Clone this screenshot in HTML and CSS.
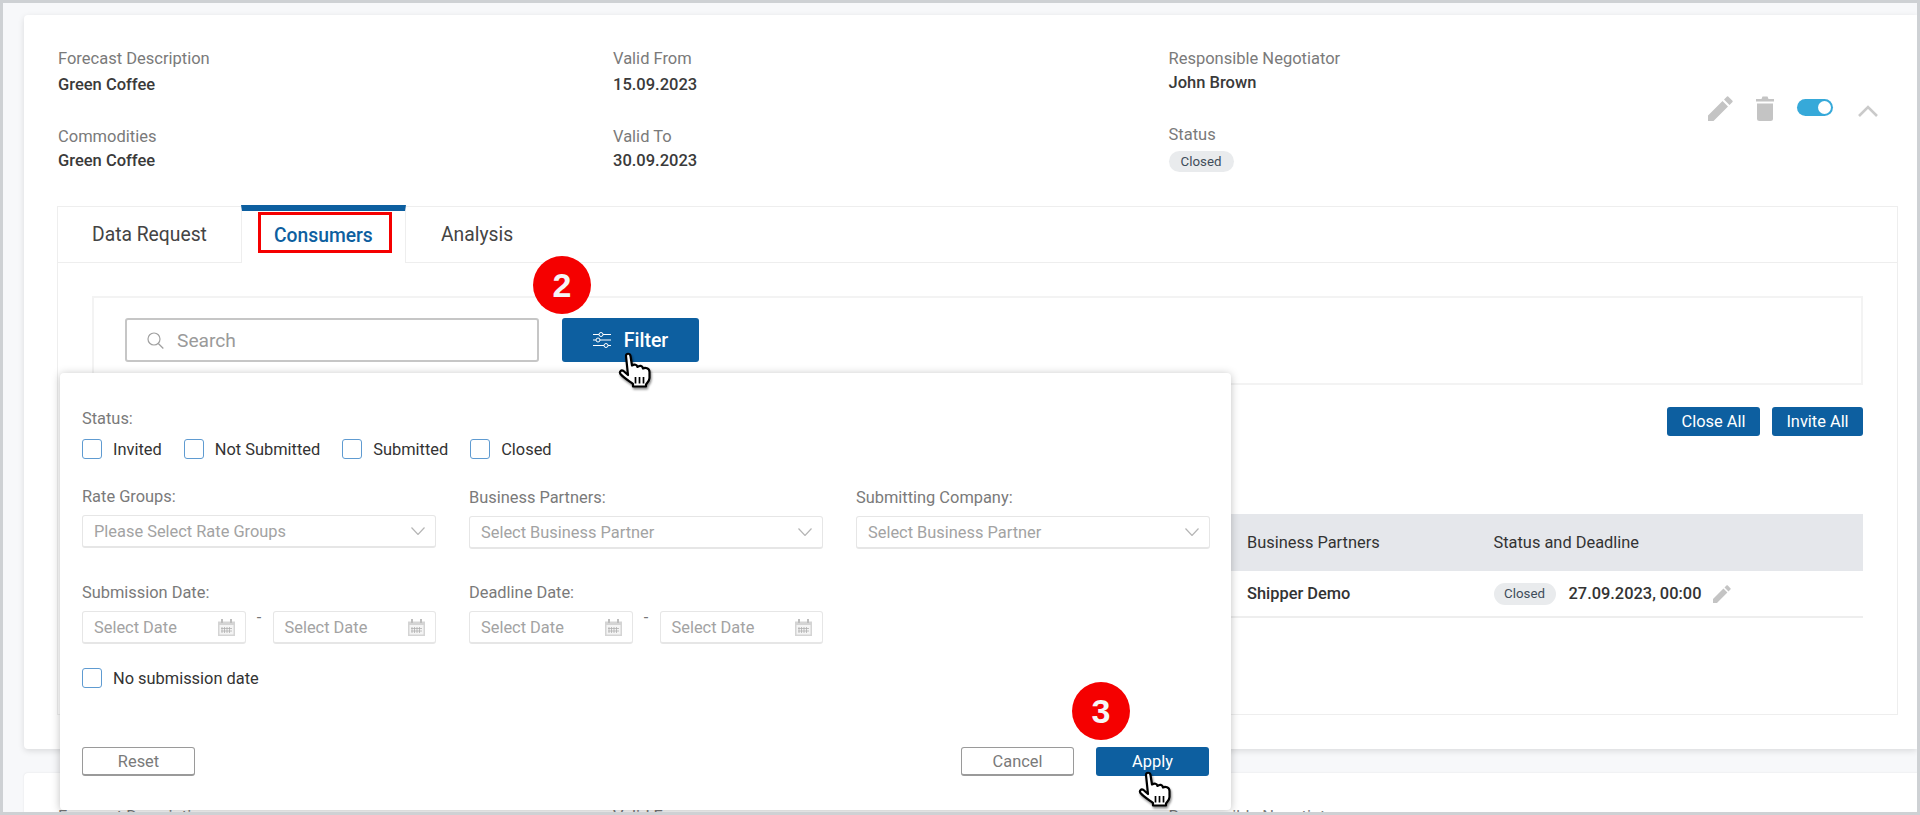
FILE: index.html
```html
<!DOCTYPE html>
<html lang="en">
<head>
    <meta charset="UTF-8">
    <title>Forecast Consumers</title>
    <link rel="stylesheet" href="styles.css">
</head>
<body>
    <svg class="defs" width="0" height="0">
        <symbol id="hand" viewBox="0 0 34 36">
            <path d="M8 4 C8 1 12 1 12.5 4 L14 13.5 C16.5 12 19 12.5 19.5 15 C21.5 13 24.5 13.5 25 16.5 C27 15 31.5 16 31.5 20 L31.5 26 C31.5 29 29 31 28 32.5 L28 34.5 L15 34.5 L15 32 C11 29 6 26 2.5 22 C1 20 3 17.5 5.5 19 L10 23 Z" fill="#fff" stroke="#000" stroke-width="2.2" stroke-linejoin="round"/>
            <path d="M17.5 25 V31.5 M21.5 25 V31.5 M25.5 25 V31.5" stroke="#000" stroke-width="1.7"/>
        </symbol>
        <symbol id="pencil" viewBox="0 0 25 25">
            <path d="M0 19.5 L14.5 5 L20 10.5 L5.5 25 H0 Z M16 3.5 L19 0.5 Q19.6 0 20.2 0.5 L24.5 4.8 Q25 5.4 24.5 6 L21.5 9 Z" fill="currentColor"/>
        </symbol>
        <symbol id="chevron-down" viewBox="0 0 14 8">
            <path d="M0.5 0.5 L7 7.5 L13.5 0.5" fill="none" stroke="#b5b5b5" stroke-width="1.2"/>
        </symbol>
        <symbol id="calendar" viewBox="0 0 17 17">
            <path d="M0 2.5 H17 V17 H0 Z" fill="#d4d4d4"/>
            <path d="M3 0 H5 V4 H3 Z M12 0 H14 V4 H12 Z" fill="#bdbdbd"/>
            <path d="M1.5 6 H15.5 V15.5 H1.5 Z" fill="#f4f4f4"/>
            <path d="M4 8 V14 M6.5 8 V14 M9 8 V14 M11.5 8 V14 M3 9.5 H14 M3 12 H14" stroke="#b0b0b0" stroke-width="0.8"/>
        </symbol>
    </svg>

    <div class="page">
        <div class="card">
            <div class="summary">
                <div class="summary-col">
                    <div class="field">
                        <div class="label">Forecast Description</div>
                        <div class="value value-low">Green Coffee</div>
                    </div>
                    <div class="field">
                        <div class="label">Commodities</div>
                        <div class="value">Green Coffee</div>
                    </div>
                </div>
                <div class="summary-col">
                    <div class="field">
                        <div class="label">Valid From</div>
                        <div class="value value-low">15.09.2023</div>
                    </div>
                    <div class="field">
                        <div class="label">Valid To</div>
                        <div class="value">30.09.2023</div>
                    </div>
                </div>
                <div class="summary-col">
                    <div class="field">
                        <div class="label">Responsible Negotiator</div>
                        <div class="value">John Brown</div>
                    </div>
                    <div class="field field-status">
                        <div class="label">Status</div>
                        <span class="pill pill-status">Closed</span>
                    </div>
                </div>
                <div class="actions">
                    <svg class="icon-pencil" width="25" height="25"><use href="#pencil"/></svg>
                    <svg class="icon-trash" width="18" height="25" viewBox="0 0 18 25">
                        <path d="M0 3 H5.5 L6.5 0.5 H11.5 L12.5 3 H18 V5.5 H0 Z" fill="#c4c4c4"/>
                        <path d="M1 7.5 H17 V22.5 Q17 25 14.5 25 H3.5 Q1 25 1 22.5 Z" fill="#c4c4c4"/>
                    </svg>
                    <span class="toggle"><span class="toggle-knob"></span></span>
                    <svg class="icon-chevron" width="20" height="12" viewBox="0 0 20 12">
                        <path d="M1 11 L10 2 L19 11" fill="none" stroke="#cacaca" stroke-width="2.6"/>
                    </svg>
                </div>
            </div>

            <div class="tabs-panel">
                <div class="tabs">
                    <div class="tab tab-first">Data Request</div>
                    <div class="tab tab-active">Consumers<span class="tab-mark"></span></div>
                    <div class="tab">Analysis</div>
                </div>
                <div class="tab-body">
                    <div class="toolbar">
                        <div class="search">
                            <svg width="17" height="17" viewBox="0 0 17 17">
                                <circle cx="7" cy="7" r="6" fill="none" stroke="#a0a0a0" stroke-width="1.2"/>
                                <path d="M11.3 11.5 L16.3 16.5" stroke="#a0a0a0" stroke-width="1.2"/>
                            </svg>
                            <span>Search</span>
                        </div>
                        <div class="btn btn-primary btn-filter">
                            <svg width="18" height="16" viewBox="0 0 18 16">
                                <path d="M0 2.5 H18 M0 8 H18 M0 13.5 H18" stroke="#fff" stroke-width="1"/>
                                <circle cx="8" cy="2.5" r="2" fill="#0d5fa0" stroke="#fff"/>
                                <circle cx="5" cy="8" r="2" fill="#0d5fa0" stroke="#fff"/>
                                <circle cx="13" cy="13.5" r="2" fill="#0d5fa0" stroke="#fff"/>
                            </svg>
                            Filter
                        </div>
                    </div>
                    <div class="bulk-actions">
                        <div class="btn btn-primary btn-close-all">Close All</div>
                        <div class="btn btn-primary btn-invite-all">Invite All</div>
                    </div>
                    <div class="table">
                        <div class="table-row table-head">
                            <div></div>
                            <div>Business Partners</div>
                            <div>Status and Deadline</div>
                        </div>
                        <div class="table-row table-line">
                            <div></div>
                            <div class="partner">Shipper Demo</div>
                            <div class="deadline">
                                <span class="pill">Closed</span>
                                <span class="deadline-date">27.09.2023, 00:00</span>
                                <svg class="icon-pencil" width="18" height="18"><use href="#pencil"/></svg>
                            </div>
                        </div>
                    </div>
                </div>
            </div>
        </div>

        <div class="card">
            <div class="summary">
                <div class="summary-col"><div class="label">Forecast Description</div></div>
                <div class="summary-col"><div class="label">Valid From</div></div>
                <div class="summary-col"><div class="label">Responsible Negotiator</div></div>
            </div>
        </div>

        <!-- filter popup -->
        <div class="popover">
            <div class="form-label">Status:</div>
            <div class="check-row">
                <label class="check"><span class="box"></span>Invited</label>
                <label class="check"><span class="box"></span>Not Submitted</label>
                <label class="check"><span class="box"></span>Submitted</label>
                <label class="check"><span class="box"></span>Closed</label>
            </div>
            <div class="form-grid">
                <div class="form-group form-group-up">
                    <div class="form-label">Rate Groups:</div>
                    <div class="select">Please Select Rate Groups<svg width="14" height="8"><use href="#chevron-down"/></svg></div>
                </div>
                <div class="form-group">
                    <div class="form-label">Business Partners:</div>
                    <div class="select">Select Business Partner<svg width="14" height="8"><use href="#chevron-down"/></svg></div>
                </div>
                <div class="form-group">
                    <div class="form-label">Submitting Company:</div>
                    <div class="select">Select Business Partner<svg width="14" height="8"><use href="#chevron-down"/></svg></div>
                </div>
            </div>
            <div class="form-grid form-grid-dates">
                <div class="form-group">
                    <div class="form-label">Submission Date:</div>
                    <div class="date-range">
                        <div class="date">Select Date<svg width="17" height="17"><use href="#calendar"/></svg></div>
                        <span class="dash">-</span>
                        <div class="date">Select Date<svg width="17" height="17"><use href="#calendar"/></svg></div>
                    </div>
                </div>
                <div class="form-group">
                    <div class="form-label">Deadline Date:</div>
                    <div class="date-range">
                        <div class="date">Select Date<svg width="17" height="17"><use href="#calendar"/></svg></div>
                        <span class="dash">-</span>
                        <div class="date">Select Date<svg width="17" height="17"><use href="#calendar"/></svg></div>
                    </div>
                </div>
            </div>
            <label class="check check-single"><span class="box"></span>No submission date</label>
            <div class="popover-footer">
                <div class="btn btn-outline">Reset</div>
                <div class="footer-right">
                    <div class="btn btn-outline">Cancel</div>
                    <div class="btn btn-primary btn-apply">Apply</div>
                </div>
            </div>
        </div>

        <!-- tutorial markers -->
        <div class="step step-filter">2</div>
        <div class="step step-apply">3</div>
        <svg class="cursor cursor-filter" width="34" height="36"><use href="#hand"/></svg>
        <svg class="cursor cursor-apply" width="34" height="36"><use href="#hand"/></svg>
    </div>
</body>
</html>
```
FILE: styles.css
```css
* {
    box-sizing: border-box;
}
html, body {
    margin: 0;
    height: 815px;
    overflow: hidden;
}
body {
    font-family: Roboto, Arial, sans-serif;
    font-size: 16.4px;
    color: #333;
}
.defs {
    position: absolute;
}
.page {
    position: relative;
    height: 815px;
    border: 3px solid #ced1d4;
    background-color: #f7f8fa;
    padding: 12px 0 0 21px;
    overflow: hidden;
    display: flex;
    flex-direction: column;
    gap: 24px;
}
.card {
    flex-shrink: 0;
    background: white;
    border-radius: 4px 0 0 4px;
    padding-bottom: 34px;
    box-shadow: 0 2px 6px rgba(0,0,0,0.12);
}
.card:nth-child(2) {
    padding-bottom: 0;
    box-shadow: 0 0 2px rgba(0,0,0,0.1);
}

/* summary */
.summary {
    display: flex;
    height: 191px;
    padding: 32px 0 0 34px;
    position: relative;
}
.card:nth-child(2) .summary {
    height: 60px;
}
.summary-col {
    width: 555px;
    flex-shrink: 0;
}
.summary-col:nth-child(2) {
    width: 555.5px;
}
.field {
    margin-bottom: 28px;
}
.label {
    color: #7a7a7a;
    font-size: 16.5px;
    line-height: 24px;
}
.value {
    font-size: 16.5px;
    font-weight: 500;
    line-height: 24px;
    color: #3a3a3a;
}
.value-low {
    margin-top: 2px;
}
.field-status .label {
    margin-bottom: 4px;
}
.pill {
    display: inline-block;
    width: 62px;
    text-align: center;
    background-color: #e9ebed;
    color: #3f4d5a;
    font-size: 13.3px;
    line-height: 22px;
    border-radius: 11px;
}
.pill-status {
    display: block;
    width: 65px;
    line-height: 21px;
}
.actions {
    position: absolute;
    top: 81px;
    right: 39px;
    display: flex;
    align-items: center;
    gap: 23px;
    height: 25px;
}
.icon-pencil {
    color: #c4c4c4;
}
.toggle {
    width: 36px;
    height: 17px;
    border-radius: 9px;
    background-color: #36a9d9;
    padding: 2px;
    display: flex;
    justify-content: flex-end;
    margin-top: -2px;
}
.toggle-knob {
    width: 13px;
    height: 13px;
    background: white;
    border-radius: 50%;
}
.icon-chevron {
    margin-left: 2px;
    margin-top: 5px;
}

/* tabs */
.tabs-panel {
    margin: 0 19px 0 33px;
    height: 509px;
    border: 1px solid #eeeeee;
}
.tabs {
    display: flex;
    height: 56px;
    border-bottom: 1px solid #eeeeee;
}
.tab {
    font-size: 19.3px;
    line-height: 55px;
    padding: 0 35px;
    color: #444;
    white-space: nowrap;
}
.tab-first {
    width: 183px;
    padding: 0 0 0 34px;
}
.tab-active {
    position: relative;
    width: 165px;
    height: 58px;
    margin-top: -2px;
    background: white;
    border-left: 1px solid #eeeeee;
    border-right: 1px solid #eeeeee;
    border-top: 6px solid #0d5fa0;
    padding: 0 0 0 32px;
    line-height: 49px;
    font-weight: 500;
    color: #0d5fa0;
}
.tab-mark {
    position: absolute;
    left: 16px;
    top: 1px;
    width: 134px;
    height: 41px;
    border: 3px solid #f50000;
}
.tab-body {
    padding: 33px 34px 0 34px;
}
.toolbar {
    display: flex;
    gap: 23px;
    height: 89px;
    padding: 20px 31px;
    border: 2px solid #f3f3f3;
}
.search {
    display: flex;
    align-items: center;
    gap: 13px;
    width: 414px;
    height: 44px;
    padding-left: 20px;
    border: 2px solid #c6c6c6;
    border-radius: 3px;
    font-size: 19.2px;
    color: #9a9a9a;
}
.btn {
    display: flex;
    align-items: center;
    justify-content: center;
    border-radius: 3px;
}
.btn-primary {
    background-color: #0d5fa0;
    color: white;
}
.btn-filter {
    width: 137px;
    height: 44px;
    gap: 13px;
    font-size: 19.5px;
    font-weight: 500;
}
.btn-close-all {
    width: 93px;
    height: 29px;
}
.btn-invite-all {
    width: 91px;
    height: 29px;
}
.bulk-actions {
    display: flex;
    justify-content: flex-end;
    gap: 12px;
    margin-top: 22px;
}

/* table */
.table {
    margin-top: 78px;
}
.table-row {
    display: grid;
    grid-template-columns: 1155px 246.5px 1fr;
    align-items: center;
}
.table-head {
    height: 57px;
    background-color: #e5e7eb;
    color: #333;
}
.table-line {
    height: 47px;
    border-bottom: 2px solid #eeeeee;
}
.partner {
    font-weight: 500;
}
.deadline {
    display: flex;
    align-items: center;
}
.deadline-date {
    font-weight: 500;
    margin: 0 12px 0 13px;
}

/* popup */
.popover {
    position: absolute;
    left: 57px;
    top: 370px;
    width: 1171px;
    height: 437px;
    background: white;
    border-radius: 4px;
    box-shadow: 0 1px 8px rgba(0,0,0,0.25);
    padding: 34px 22px 34px 22px;
    display: flex;
    flex-direction: column;
}
.form-label {
    color: #7a7a7a;
    line-height: 24px;
}
.check-row {
    display: flex;
    gap: 22px;
    margin-top: 8px;
    height: 20px;
}
.check {
    display: flex;
    align-items: center;
    gap: 11px;
    color: #333;
}
.box {
    width: 20px;
    height: 20px;
    border: 1px solid #5f9bd1;
    border-radius: 3px;
}
.form-grid {
    display: grid;
    grid-template-columns: repeat(3, 354px);
    column-gap: 33px;
    margin-top: 27px;
}
.form-grid-dates {
    margin-top: 32px;
}
.form-group-up {
    margin-top: -1px;
}
.select, .date {
    display: flex;
    align-items: center;
    justify-content: space-between;
    height: 33px;
    margin-top: 6px;
    padding: 0 10px 0 11px;
    border: 1px solid #e6e6e6;
    border-bottom-width: 2px;
    border-radius: 3px;
    color: #a3a3a3;
}
.date-range {
    display: flex;
}
.date {
    width: 163.5px;
}
.dash {
    width: 27px;
    text-align: center;
    color: #777;
    line-height: 26px;
}
.check-single {
    margin-top: 24px;
}
.popover-footer {
    display: flex;
    justify-content: space-between;
    margin-top: auto;
}
.footer-right {
    display: flex;
    gap: 22px;
}
.btn-outline {
    width: 113px;
    height: 29px;
    border: 1px solid #9a9a9a;
    border-bottom-width: 2px;
    color: #7a7a7a;
}
.btn-apply {
    width: 113px;
    height: 29px;
}

/* tutorial markers */
.step {
    position: absolute;
    width: 58px;
    height: 58px;
    border-radius: 50%;
    background-color: #f50000;
    color: #f6f6f6;
    font-family: "Liberation Sans", Arial, sans-serif;
    font-size: 34px;
    font-weight: 700;
    line-height: 58px;
    text-align: center;
}
.step-filter {
    left: 530px;
    top: 253px;
}
.step-apply {
    left: 1069px;
    top: 679px;
}
.cursor {
    position: absolute;
    filter: drop-shadow(1px 2px 1px rgba(0,0,0,0.45));
}
.cursor-filter {
    left: 615px;
    top: 349px;
}
.cursor-apply {
    left: 1135px;
    top: 768px;
}
```
